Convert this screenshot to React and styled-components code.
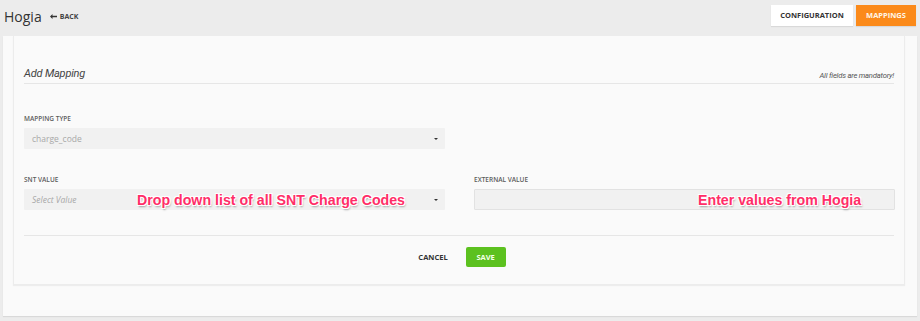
import React from "react"
import styled, { createGlobalStyle } from "styled-components"

const GlobalStyle = createGlobalStyle`
  html, body {
    margin: 0;
    padding: 0;
    background: #ececec;
    font-family: "Open Sans", "Liberation Sans", sans-serif;
  }
`

const Page = styled.div`
  width: 920px;
  height: 321px;
  overflow: hidden;
`

const Header = styled.div`
  height: 36px;
  display: flex;
  align-items: center;
  padding: 0 4px;
  box-sizing: border-box;
`

const Title = styled.div`
  font-size: 14px;
  color: #333;
  margin-top: -4px;
`

const Back = styled.div`
  margin-left: 8px;
  margin-top: -4px;
  font-size: 7px;
  font-weight: 700;
  color: #444;
  display: flex;
  align-items: center;
  gap: 3px;
`

const Tabs = styled.div`
  margin-left: auto;
  display: flex;
  gap: 3px;
  margin-top: -6px;
`

const Tab = styled.div`
  height: 21px;
  width: ${p => p.$w}px;
  display: flex;
  align-items: center;
  justify-content: center;
  font-size: 7.5px;
  font-weight: 700;
  box-sizing: border-box;
  background: ${p => (p.$active ? "#fb8a1a" : "#fff")};
  color: ${p => (p.$active ? "#fff6e8" : "#333")};
  box-shadow: 0 1px 1px rgba(0, 0, 0, 0.08);
`

const Panel = styled.div`
  margin: 0 3px;
  height: 280px;
  background: #fafafa;
  box-shadow: 0 1px 1px rgba(0, 0, 0, 0.08);
`

const Card = styled.div`
  margin: 0 12px 0 10px;
  height: 249px;
  padding: 0 10px;
  box-sizing: border-box;
  background: #fafafa;
  border: 1px solid #ececec;
  border-top: none;
  box-shadow: 0 1px 1px rgba(0, 0, 0, 0.05);
`

const CardHead = styled.div`
  padding-top: 31px;
  height: 48px;
  box-sizing: border-box;
  display: flex;
  align-items: flex-end;
  justify-content: space-between;
  border-bottom: 1px solid #e6e6e6;
  padding-bottom: 3px;
`

const HeadTitle = styled.div`
  font-family: Roboto, sans-serif;
  font-style: italic;
  font-size: 11px;
  color: #444;
  letter-spacing: -0.2px;
`

const Mandatory = styled.div`
  font-family: Roboto, sans-serif;
  font-style: italic;
  font-size: 7.6px;
  color: #555;
  letter-spacing: -0.2px;
`

const Grid = styled.div`
  display: grid;
  grid-template-columns: 421px 421px;
  column-gap: 29px;
  row-gap: 26px;
  padding-top: 30px;
`

const Field = styled.div`
  position: relative;
  display: flex;
  flex-direction: column;
`

const Label = styled.div`
  font-size: 6.5px;
  font-weight: 600;
  color: #5a5a5a;
  height: 9px;
  margin-bottom: 5px;
  text-transform: uppercase;
`

const Box = styled.div`
  height: 21px;
  background: #f1f1f1;
  border: 1px solid ${p => (p.$outlined ? "#e2e2e2" : "#f1f1f1")};
  border-radius: 1px;
  box-sizing: border-box;
  display: flex;
  align-items: center;
  padding: 0 6px 0 7px;
  font-size: 8.5px;
  color: #a8a8a8;
  font-style: ${p => (p.$italic ? "italic" : "normal")};
`

const Caret = styled.span`
  margin-left: auto;
  width: 0;
  height: 0;
  border-left: 2px solid transparent;
  border-right: 2px solid transparent;
  border-top: 2px solid #333;
`

const Note = styled.div`
  position: absolute;
  left: ${p => p.$left}px;
  top: 17px;
  font-family: "Liberation Sans", Arial, sans-serif;
  font-weight: 700;
  font-size: 14.2px;
  color: #ff2e68;
  white-space: nowrap;
  text-shadow: 0 0 1px #fff, 1px 1px 0 #fff, -1px -1px 0 #fff, 1px -1px 0 #fff,
    -1px 1px 0 #fff, 1px 2px 2px rgba(0, 0, 0, 0.35);
`

const Footer = styled.div`
  margin-top: 25px;
  border-top: 1px solid #e6e6e6;
  display: flex;
  justify-content: center;
  align-items: center;
  gap: 18px;
  padding-top: 11px;
  padding-left: 6px;
`

const Cancel = styled.div`
  font-size: 7.5px;
  font-weight: 700;
  color: #333;
`

const Save = styled.div`
  width: 40px;
  height: 20px;
  background: #5cc11f;
  border-radius: 2px;
  color: #f4ffe8;
  font-size: 7.5px;
  font-weight: 700;
  display: flex;
  align-items: center;
  justify-content: center;
`

export default function App() {
  return (
    <Page>
      <GlobalStyle />
      <Header>
        <Title>Hogia</Title>
        <Back>
          <svg width="7" height="5" viewBox="0 0 7 5">
            <path d="M0 2.5 L2.5 0 L2.5 1.8 L7 1.8 L7 3.2 L2.5 3.2 L2.5 5 Z" fill="#333" />
          </svg>
          BACK
        </Back>
        <Tabs>
          <Tab $w={82}>CONFIGURATION</Tab>
          <Tab $w={60} $active>MAPPINGS</Tab>
        </Tabs>
      </Header>
      <Panel>
        <Card>
          <CardHead>
            <HeadTitle>Add Mapping</HeadTitle>
            <Mandatory>All fields are mandatory!</Mandatory>
          </CardHead>
          <Grid>
            <Field>
              <Label>Mapping Type</Label>
              <Box>
                charge_code
                <Caret />
              </Box>
            </Field>
            <div />
            <Field>
              <Label>SNT Value</Label>
              <Box $italic>
                Select Value
                <Caret />
              </Box>
              <Note $left={113}>Drop down list of all SNT Charge Codes</Note>
            </Field>
            <Field>
              <Label>External Value</Label>
              <Box $outlined />
              <Note $left={224}>Enter values from Hogia</Note>
            </Field>
          </Grid>
          <Footer>
            <Cancel>CANCEL</Cancel>
            <Save>SAVE</Save>
          </Footer>
        </Card>
      </Panel>
    </Page>
  )
}
